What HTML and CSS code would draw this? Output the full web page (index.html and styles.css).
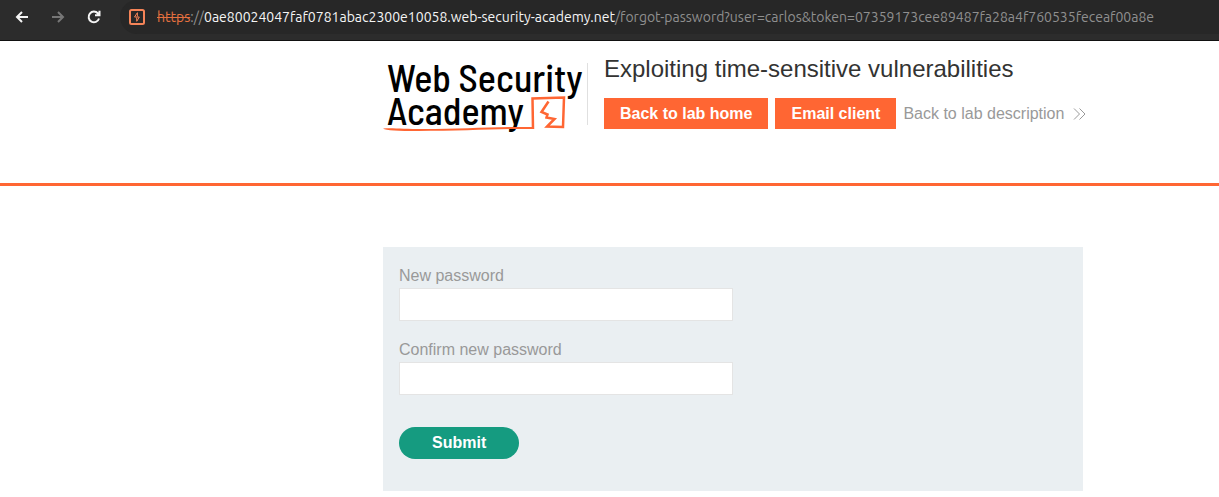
FILE: index.html
```html
<!DOCTYPE html>
<html lang="en">
<head>
<meta charset="utf-8">
<title>Exploiting time-sensitive vulnerabilities</title>
<link rel="stylesheet" href="styles.css">
</head>
<body>
<div class="toolbar">
  <button class="nav-button" type="button" aria-label="Back">
    <svg width="16" height="16" viewBox="0 0 16 16"><path d="M14 8H3M8 3 3 8l5 5"/></svg>
  </button>
  <button class="nav-button nav-button-off" type="button" aria-label="Forward" disabled>
    <svg width="16" height="16" viewBox="0 0 16 16"><path d="M2 8h11M8 3l5 5-5 5"/></svg>
  </button>
  <button class="nav-button" type="button" aria-label="Reload">
    <svg width="16" height="16" viewBox="0 0 16 16"><path d="M13 9.500A5.300 5.300 0 1 1 12 4.500L13.500 6M13.500 1.700V6.300H9"/></svg>
  </button>
  <div class="address">
    <svg class="site-icon" width="16" height="16" viewBox="0 0 16 16"><rect x="1" y="1" width="14" height="14" rx="1.500"/><path class="bolt" d="M8.500 3.500 5.500 8H10.300L7.700 12.500M8.400 4V7.500M7.700 8.500V12"/></svg>
    <div class="url"><span class="url-scheme">https</span>://<span class="url-host">0ae80024047faf0781abac2300e10058.web-security-academy.net</span>/forgot-password?user=carlos&amp;token=07359173cee89487fa28a4f760535feceaf00a8e</div>
  </div>
</div>
<header class="lab-header">
  <div class="container lab-bar">
    <a class="logo" href="#">
      <span class="logo-line">Web Security</span>
      <span class="logo-line">Academy</span>
      <svg class="logo-mark" width="200" height="80" viewBox="0 0 200 80"><path class="underline" d="M0 74.500C8 73.500 20 75 40 75C80 75 110 72.500 149 73V75C120 74.500 80 77 35 77C15 77 3 76.500 0 74.500Z"/><path class="frame" d="M150 75 149.500 44.500 181 43.500 180 73 164 72.500 171.500 65 163.500 63.500 164.500 60.500 158.500 58 165.500 47.500"/></svg>
    </a>
    <div class="lab-title">
      <h1>Exploiting time-sensitive vulnerabilities</h1>
      <div class="actions">
        <a class="action-button" href="#">Back to lab home</a>
        <a class="action-button" href="#">Email client</a>
        <a class="back-link" href="#">Back to lab description
          <svg width="13" height="12" viewBox="0 0 13 12"><path d="M1 .5 6.500 6 1 11.500M6.500 .5 12 6 6.500 11.500"/></svg>
        </a>
      </div>
    </div>
  </div>
</header>
<main class="container">
  <form class="password-form">
    <label for="new-password">New password</label>
    <input id="new-password" type="password">
    <label for="confirm-password">Confirm new password</label>
    <input id="confirm-password" type="password">
    <button class="submit" type="submit">Submit</button>
  </form>
</main>
</body>
</html>
```
FILE: styles.css
```css
* { box-sizing: border-box; }
body {
  margin: 0;
  background: #fff;
  font: 16px/20px "Liberation Sans", Arial, sans-serif;
  color: #999;
}
svg { fill: none; }
.toolbar {
  display: flex;
  align-items: flex-start;
  gap: 20px;
  height: 41px;
  padding-left: 14px;
  background: #2c2c2c;
  border-bottom: 1px solid #111;
}
.nav-button {
  display: flex;
  padding: 9px 0;
  border: 0;
  background: none;
}
.nav-button svg { stroke: #f5f5f5; stroke-width: 2; }
.nav-button-off svg { stroke: #777; }
.address {
  flex: 1;
  display: flex;
  align-items: center;
  gap: 12px;
  height: 34px;
  margin-left: -2px;
  padding-left: 9px;
  background: #272727;
  border-radius: 17px 0 0 17px;
}
.site-icon { flex: none; stroke: #f58458; stroke-width: 2; }
.site-icon .bolt { stroke-width: 1; }
.url {
  font: 14px/20px Ubuntu, Roboto, sans-serif;
  color: #8f8f8f;
  white-space: nowrap;
}
.url-scheme { color: #e4703f; text-decoration: line-through; }
.url-host { color: #f5f5f5; }
.container {
  max-width: 1083px;
  padding-left: 383px;
}
.lab-header {
  height: 145px;
  padding-top: 13px;
  border-bottom: 3px solid #ff6633;
}
.lab-bar { display: flex; }
.logo {
  position: relative;
  flex: none;
  width: 204px;
  height: 80px;
  padding: 7px 0 0 4px;
  color: #000;
  text-decoration: none;
}
.logo-line {
  display: block;
  font: 500 38px/33px "Barlow Semi Condensed", "Roboto Condensed", "Barlow Condensed", Barlow, sans-serif;
  white-space: nowrap;
}
.logo-mark { position: absolute; left: 0; top: 0; }
.logo-mark .underline { fill: #ff6633; }
.logo-mark .frame { stroke: #ff6633; stroke-width: 2.500; }
.lab-title {
  flex: none;
  margin-top: 9px;
  height: 62px;
  padding-left: 16px;
  border-left: 1px solid #e0e0e0;
}
h1 {
  margin: -8px 0 15px;
  font-size: 24px;
  font-weight: 400;
  line-height: 28px;
  color: #333332;
}
.actions { display: flex; gap: 7px; }
.action-button {
  padding: 6px 16px 5px;
  background: #ff6633;
  color: #fff;
  font-weight: 700;
  text-decoration: none;
}
.back-link {
  display: flex;
  align-items: center;
  gap: 9px;
  color: #999;
  text-decoration: none;
}
.back-link svg { stroke: #999; }
.password-form {
  margin-top: 61px;
  padding: 19px 16px 32px;
  background: #eaeff2;
}
label { display: block; line-height: 20px; }
input {
  display: block;
  width: 50%;
  height: 33px;
  margin: 2px 0 19px;
  padding: 0 8px;
  border: 1px solid #e4e4e4;
  background: #fff;
  font: inherit;
}
.submit {
  display: block;
  margin-top: 32px;
  padding: 6px 33px;
  border: 0;
  border-radius: 16px;
  background: #159b80;
  color: #fff;
  font: 700 16px/20px "Liberation Sans", Arial, sans-serif;
}
```
